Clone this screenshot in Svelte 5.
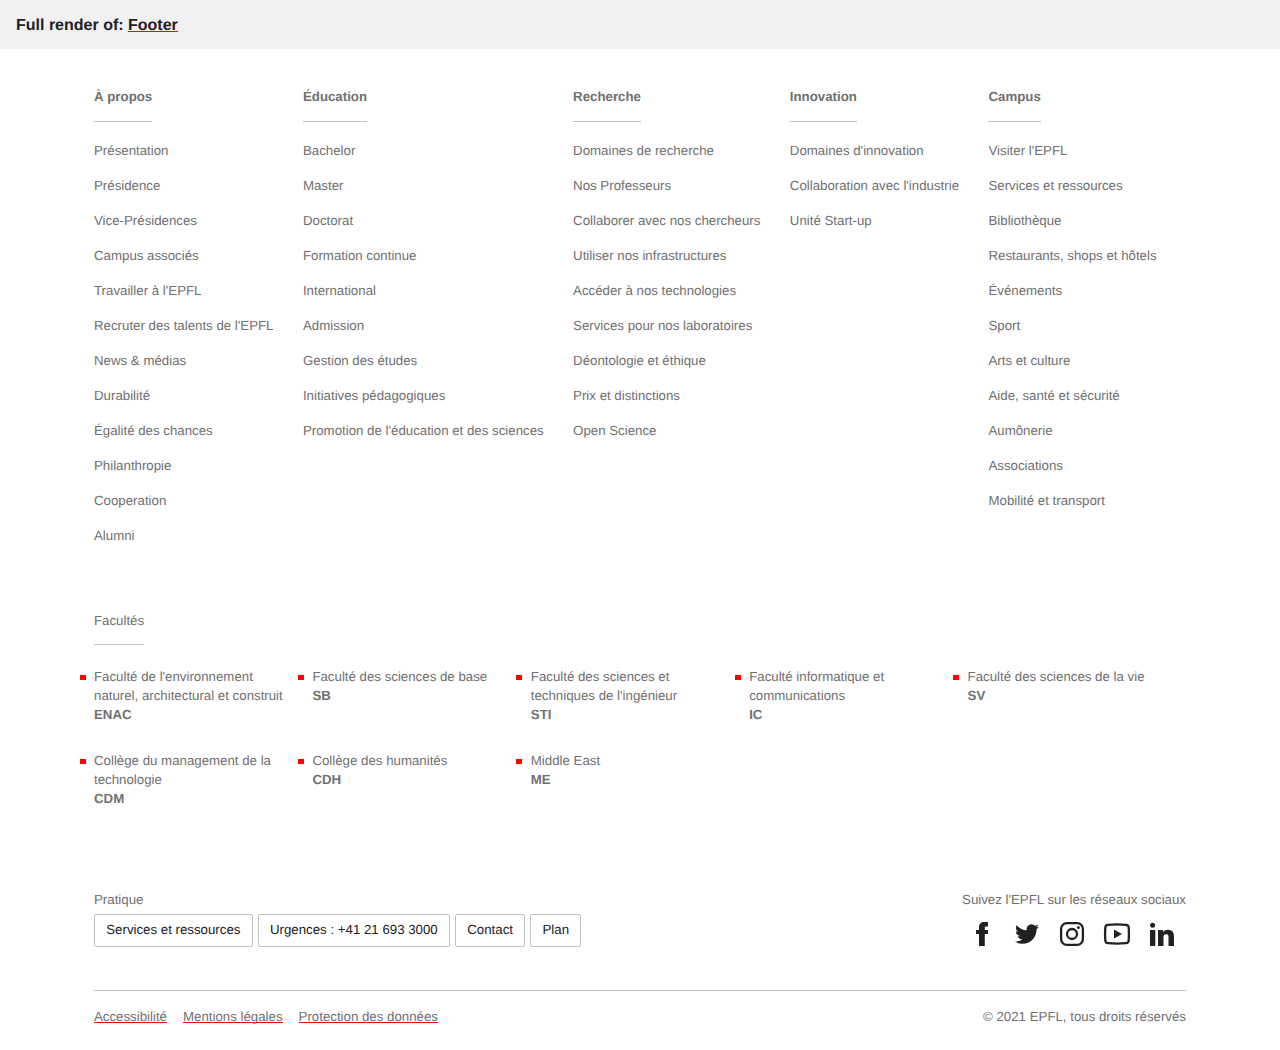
<script>
  const columns = [
    { title: 'À propos', links: ['Présentation', 'Présidence', 'Vice-Présidences', 'Campus associés', "Travailler à l'EPFL", "Recruter des talents de l'EPFL", 'News & médias', 'Durabilité', 'Égalité des chances', 'Philanthropie', 'Cooperation', 'Alumni'] },
    { title: 'Éducation', links: ['Bachelor', 'Master', 'Doctorat', 'Formation continue', 'International', 'Admission', 'Gestion des études', 'Initiatives pédagogiques', "Promotion de l'éducation et des sciences"] },
    { title: 'Recherche', links: ['Domaines de recherche', 'Nos Professeurs', 'Collaborer avec nos chercheurs', 'Utiliser nos infrastructures', 'Accéder à nos technologies', 'Services pour nos laboratoires', 'Déontologie et éthique', 'Prix et distinctions', 'Open Science'] },
    { title: 'Innovation', links: ["Domaines d'innovation", "Collaboration avec l'industrie", 'Unité Start-up'] },
    { title: 'Campus', links: ["Visiter l'EPFL", 'Services et ressources', 'Bibliothèque', 'Restaurants, shops et hôtels', 'Événements', 'Sport', 'Arts et culture', 'Aide, santé et sécurité', 'Aumônerie', 'Associations', 'Mobilité et transport'] },
  ];
  const faculties = [
    ["Faculté de l'environnement naturel, architectural et construit", 'ENAC'],
    ['Faculté des sciences de base', 'SB'],
    ["Faculté des sciences et techniques de l'ingénieur", 'STI'],
    ['Faculté informatique et communications', 'IC'],
    ['Faculté des sciences de la vie', 'SV'],
    ['Collège du management de la technologie', 'CDM'],
    ['Collège des humanités', 'CDH'],
    ['Middle East', 'ME'],
  ];
  const practical = ['Services et ressources', 'Urgences : +41 21 693 3000', 'Contact', 'Plan'];
  const legal = ['Accessibilité', 'Mentions légales', 'Protection des données'];
</script>

<header class="banner">Full render of: <a class="underlined" href="#footer">Footer</a></header>

<footer class="footer" id="footer">
  <nav class="columns">
    {#each columns as column}
      <section class="column">
        <h2 class="title strong">{column.title}</h2>
        <ul>
          {#each column.links as link}
            <li><a href="#footer">{link}</a></li>
          {/each}
        </ul>
      </section>
    {/each}
  </nav>

  <section class="faculties">
    <h2 class="title">Facultés</h2>
    <ul class="faculty-grid">
      {#each faculties as [name, code]}
        <li class="faculty"><a href="#footer">{name}<strong>{code}</strong></a></li>
      {/each}
    </ul>
  </section>

  <div class="contact">
    <section>
      <p>Pratique</p>
      <div class="buttons">
        {#each practical as label}<a class="button" href="#footer">{label}</a>{/each}
      </div>
    </section>
    <section>
      <p>Suivez l'EPFL sur les réseaux sociaux</p>
      <div class="social">
        <a href="#footer" aria-label="Facebook">
          <svg viewBox="0 0 24 24"><path d="M18 0v4.500h-2.200C15 4.500 14.800 4.900 14.800 5.600V8H18v4h-3.200v12H9V12H6V8h3V5.500C9 2 10.900 0 14.200 0z" /></svg>
        </a>
        <a href="#footer" aria-label="Twitter">
          <svg viewBox="0 0 24 24"><path d="M23.950 4.570a10 10 0 0 1-2.820.770 4.960 4.960 0 0 0 2.160-2.720c-.950.550-2 .950-3.130 1.180a4.920 4.920 0 0 0-8.380 4.480C7.690 8.090 4.070 6.130 1.640 3.160a4.820 4.820 0 0 0-.660 2.470c0 1.710.870 3.210 2.190 4.100a4.900 4.900 0 0 1-2.230-.620v.060a4.920 4.920 0 0 0 3.950 4.830 5 5 0 0 1-2.210.080 4.940 4.940 0 0 0 4.600 3.420A9.870 9.870 0 0 1 0 19.540a13.990 13.990 0 0 0 7.560 2.210c9.050 0 14-7.500 14-13.980l-.020-.640a9.940 9.940 0 0 0 2.410-2.560z" /></svg>
        </a>
        <a href="#footer" aria-label="Instagram">
          <svg viewBox="0 0 24 24"><rect class="line" x="1.100" y="1.100" width="21.800" height="21.800" rx="5.800" /><circle class="line" cx="12" cy="12" r="5" /><circle cx="18.400" cy="5.600" r="1.500" /></svg>
        </a>
        <a href="#footer" aria-label="YouTube">
          <svg viewBox="0 0 24 24"><path class="line" d="M3 2.800Q12 2 21 2.800 23.500 3 23.700 5.500 24.200 12 23.700 18.500 23.500 21 21 21.200 12 22 3 21.200.500 21 .300 18.500-.200 12 .300 5.500.500 3 3 2.800z" /><path d="M9 7.500v9L17 12z" /></svg>
        </a>
        <a href="#footer" aria-label="LinkedIn">
          <svg viewBox="0 0 24 24"><circle cx="2.600" cy="3.300" r="2.500" /><path d="M0 8h5.300v16H0zM8 8h5v2.200C13.800 8.700 15.400 7.700 17.600 7.700c5.100 0 6.400 3 6.400 7.300v9h-5.500v-8.300c0-2-.100-3.400-2.300-3.400-2.300 0-2.700 1.500-2.700 3.400V24H8z" /></svg>
        </a>
      </div>
    </section>
  </div>

  <div class="bottom">
    <nav class="legal">
      {#each legal as label}<a class="underlined" href="#footer">{label}</a>{/each}
    </nav>
    <p>© 2021 EPFL, tous droits réservés</p>
  </div>
</footer>

<style>
  :global(body) {
    font-family: "Liberation Sans", Arial, sans-serif;
    background: #fff;
    text-rendering: geometricPrecision;
  }
  ul, p, h2 { margin: 0; padding: 0; list-style: none; }
  a { color: inherit; text-decoration: none; }
  .banner {
    box-sizing: border-box;
    height: 49px;
    padding: 0 16px;
    background: #f1f1f4;
    color: #212121;
    font-size: 16px;
    font-weight: 700;
    line-height: 51px;
  }
  .underlined {
    background: linear-gradient(#f00, #f00) 0 calc(100% - 1px) / 100% 1px no-repeat;
  }
  .banner .underlined { background-position-y: calc(100% - 2px); }
  .footer {
    width: 1092px;
    margin: 0 auto;
    padding-top: 38px;
    color: #707070;
    font-size: 13.280px;
    line-height: 19px;
  }
  .columns { display: flex; height: 524px; }
  .column { flex: 1 0 auto; }
  .title {
    width: fit-content;
    padding-bottom: 14px;
    border-bottom: 1px solid #c1c1c1;
    font-size: inherit;
    font-weight: 400;
  }
  .strong { padding-bottom: 15px; font-weight: 700; }
  .column ul { padding-top: 19px; }
  .column li { height: 35px; }
  .faculties { height: 279px; }
  .title + .faculty-grid { padding-top: 22px; }
  .faculty-grid {
    display: grid;
    grid-template-columns: repeat(5, 218.400px);
    row-gap: 27px;
  }
  .faculty { position: relative; padding-right: 28px; }
  .faculty:first-child { padding-right: 20px; }
  .faculty::before {
    position: absolute;
    top: 8px;
    left: -14.400px;
    width: 6px;
    height: 5px;
    background: #f00;
    content: "";
  }
  .faculty strong { display: block; }
  .contact {
    display: flex;
    justify-content: space-between;
    height: 100px;
    border-bottom: 1px solid #c1c1c1;
  }
  .buttons { display: flex; gap: 5px; padding-top: 5px; }
  .button {
    padding: 5px 11.250px 7px;
    border: 1px solid #c1c1c1;
    border-radius: 2px;
    color: #212121;
  }
  .social { display: flex; justify-content: flex-end; gap: 21px; padding: 13px 12px 0 0; }
  .social a { width: 24px; height: 24px; }
  svg { display: block; width: 24px; height: 24px; overflow: visible; fill: #212121; }
  .line { fill: none; stroke: #212121; stroke-width: 2.300; }
  .bottom { display: flex; justify-content: space-between; padding-top: 16px; }
  .legal { display: flex; gap: 16px; }
  .legal a { height: 17px; }
</style>
